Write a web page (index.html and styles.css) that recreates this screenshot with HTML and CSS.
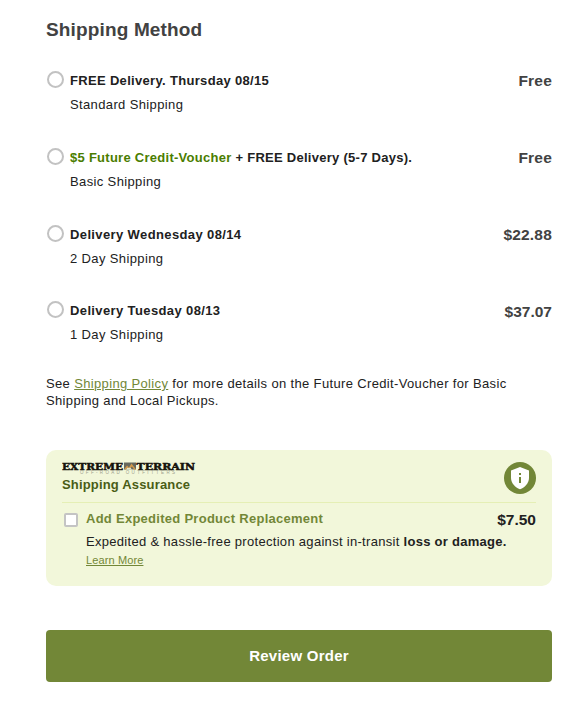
FILE: index.html
```html
<!DOCTYPE html>
<html lang="en">
<head>
<meta charset="utf-8">
<title>Shipping Method</title>
<link rel="stylesheet" href="styles.css">
</head>
<body>
<main class="checkout">
  <h1 class="heading">Shipping Method</h1>
  <div class="options">
    <label class="option">
      <input class="radio" type="radio" name="ship">
      <span class="details"><b class="title">FREE Delivery. Thursday 08/15</b><span class="method">Standard Shipping</span></span>
      <span class="price">Free</span>
    </label>
    <label class="option">
      <input class="radio" type="radio" name="ship">
      <span class="details"><b class="title title-voucher"><span class="credit">$5 Future Credit-Voucher</span> + FREE Delivery (5-7 Days).</b><span class="method">Basic Shipping</span></span>
      <span class="price">Free</span>
    </label>
    <label class="option option-short">
      <input class="radio" type="radio" name="ship">
      <span class="details"><b class="title title-day">Delivery Wednesday 08/14</b><span class="method">2 Day Shipping</span></span>
      <span class="price">$22.88</span>
    </label>
    <label class="option">
      <input class="radio" type="radio" name="ship">
      <span class="details"><b class="title title-day">Delivery Tuesday 08/13</b><span class="method">1 Day Shipping</span></span>
      <span class="price price-low">$37.07</span>
    </label>
  </div>
  <p class="policy">See <a class="link" href="#">Shipping Policy</a> for more details on the Future Credit-Voucher for Basic<br>Shipping and Local Pickups.</p>
  <section class="assurance">
    <header class="assurance-head">
      <div>
        <svg class="logo" width="134" height="14" viewBox="0 0 134 14">
          <text class="logo-name" x="0" y="7.500" textLength="61" lengthAdjust="spacingAndGlyphs">EXTREME</text>
          <path d="M62 .5h12v7H62z" fill="#66685d"/>
          <path d="M62 7.500l3-4 2 2 2.500-4 4.500 6h-2l-2-3-2 2-2-1-2 2z" fill="#d39a4c"/>
          <path d="M64 7.500l2-2 1 1 1-1 2 2z" fill="#f2f7da"/>
          <text class="logo-name" x="74.500" y="7.500" textLength="58.500" lengthAdjust="spacingAndGlyphs">TERRAIN</text>
          <text class="logo-tag" x="18" y="12" textLength="95">OFF-ROAD OUTFITTERS</text>
        </svg>
        <h2 class="assurance-title">Shipping Assurance</h2>
      </div>
      <svg class="shield" width="32" height="32" viewBox="0 0 32 32">
        <circle cx="16" cy="16" r="16" fill="#728737"/>
        <path d="M16 5l9 3.500v7.500c0 5-4 9.500-9 11.200-5-1.700-9-6.200-9-11.200V8.500z" fill="#fff"/>
        <path d="M15 11h2v2h-2zM15 15h2v6h-2z" fill="#728737"/>
      </svg>
    </header>
    <div class="addon">
      <input class="check" type="checkbox">
      <div class="addon-body">
        <div class="addon-row"><b class="addon-title">Add Expedited Product Replacement</b><span class="addon-price">$7.50</span></div>
        <p class="addon-text">Expedited &amp; hassle-free protection against in-transit <b class="strong">loss or damage.</b></p>
        <a class="learn" href="#">Learn More</a>
      </div>
    </div>
  </section>
  <button class="review">Review Order</button>
</main>
</body>
</html>
```
FILE: styles.css
```css
* { box-sizing: border-box; }
body {
  margin: 0;
  background: #fff;
  color: #212121;
  font: 13px/17px "Liberation Sans", Arial, sans-serif;
  letter-spacing: 0.4px;
}
.checkout { width: 506px; margin: 0 0 0 46px; padding-top: 18px; }
.heading {
  margin: 0;
  color: #424242;
  font-size: 19px;
  line-height: 24px;
  letter-spacing: 0.15px;
}
.options { padding-top: 27px; }
.option { display: flex; align-items: flex-start; height: 77px; }
.option-short { height: 76px; }
.radio {
  appearance: none;
  flex: none;
  width: 17px;
  height: 17px;
  margin: 1.5px 6px 0 1px;
  border: 2px solid #c2c2c2;
  border-radius: 50%;
  background: #fff;
}
.details { display: flex; flex: 1; flex-direction: column; gap: 7px; padding-top: 3px; }
.title { letter-spacing: 0.32px; }
.title-voucher { letter-spacing: 0.27px; }
.title-day { letter-spacing: 0.38px; }
.credit { color: #4a7d00; }
.method { letter-spacing: 0.37px; }
.price {
  padding-top: 3px;
  color: #424242;
  font-size: 15.5px;
  font-weight: bold;
  line-height: 18px;
  letter-spacing: 0.2px;
}
.price-low { padding-top: 4px; letter-spacing: 0; }
.policy { margin: -1px 0 0; white-space: nowrap; letter-spacing: 0.35px; }
.link, .learn { color: #728737; text-decoration: underline; }
.assurance {
  height: 136px;
  margin-top: 41px;
  padding: 12px 16px;
  border-radius: 10px;
  background: #f2f7da;
}
.assurance-head {
  display: flex;
  justify-content: space-between;
  height: 41px;
  border-bottom: 1px solid #e5efb5;
}
.logo { display: block; }
.logo-name {
  fill: #16140c;
  stroke: #16140c;
  stroke-width: 0.5px;
  font: bold 9.5px "DejaVu Serif", serif;
  letter-spacing: 0;
}
.logo-tag { fill: #a0a28e; font: 4.5px "Liberation Sans", sans-serif; letter-spacing: 0; }
.assurance-title {
  margin: 0;
  color: #4a5d16;
  font-size: 13px;
  line-height: 17px;
  letter-spacing: 0.17px;
}
.addon { display: flex; padding-top: 7px; }
.check {
  appearance: none;
  flex: none;
  width: 14px;
  height: 14px;
  margin: 3px 8px 0 2px;
  border: 2px solid #c4c4c4;
  border-radius: 2px;
  background: #fff;
}
.addon-body { flex: 1; }
.addon-row { display: flex; justify-content: space-between; height: 23px; }
.addon-title { color: #728737; letter-spacing: 0.27px; }
.addon-price {
  padding-top: 1px;
  font-size: 15.5px;
  font-weight: bold;
  line-height: 18px;
  letter-spacing: 0;
}
.addon-text { margin: 0; white-space: nowrap; letter-spacing: 0.3px; }
.strong { letter-spacing: 0.28px; }
.learn { display: block; width: max-content; margin-top: 2px; font-size: 11px; letter-spacing: 0.12px; }
.review {
  display: block;
  width: 100%;
  height: 52px;
  margin-top: 44px;
  border: 0;
  border-radius: 4px;
  background: #728737;
  color: #fff;
  font: bold 15px/18px "Liberation Sans", Arial, sans-serif;
  letter-spacing: 0.25px;
}
```
